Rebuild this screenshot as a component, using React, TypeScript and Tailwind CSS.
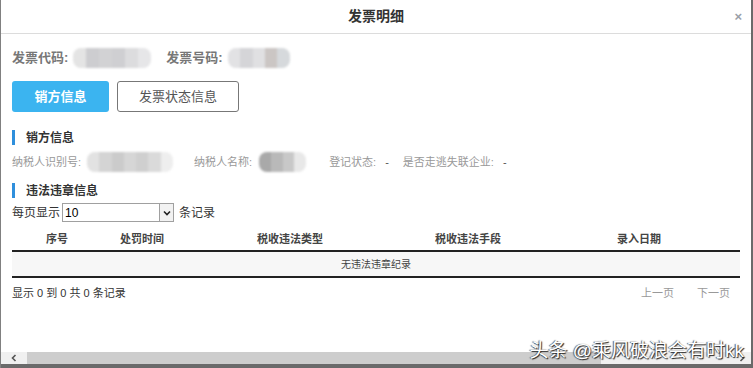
import React from "react";

const Blur: React.FC<{ w: number; shades: string[] }> = ({ w, shades }) => (
  <div className="flex h-[20px] overflow-hidden rounded-[8px] blur-[1px]" style={{ width: w }}>
    {shades.map((c, i) => (
      <div key={i} className="h-full flex-1" style={{ background: c }} />
    ))}
  </div>
);

const SectionTitle: React.FC<{ title: string }> = ({ title }) => (
  <div className="flex h-[15px] items-center">
    <div className="h-[15px] w-[3px] bg-[#2f8fdc]" />
    <span className="ml-[11px] text-[12px] font-bold text-[#333]">{title}</span>
  </div>
);

const cols = [
  { label: "序号", w: "w-[90px]" },
  { label: "处罚时间", w: "w-[80px]" },
  { label: "税收违法类型", w: "w-[216px]" },
  { label: "税收违法手段", w: "w-[140px]" },
  { label: "录入日期", w: "flex-1" },
];

export default function App() {
  return (
    <div
      className="relative flex h-[368px] w-[753px] flex-col overflow-hidden border-l border-r-2 border-l-[#808080] border-r-[#6a6a6a] bg-white text-[#333]"
      style={{ fontFamily: '"Liberation Sans", "Noto Sans CJK SC", sans-serif' }}
    >
      {/* HEADER */}
      <div className="relative flex h-[34px] shrink-0 items-center justify-center border-b border-[#dcdcdc]">
        <span className="text-[14px] font-bold text-[#333]">发票明细</span>
        <span className="absolute right-[9px] top-[7px] text-[13px] font-bold text-[#9aa0a8]">×</span>
      </div>

      {/* BODY */}
      <div className="flex flex-1 flex-col px-[11px]">
        <div className="mt-[14px] flex h-[20px] items-center text-[13px] font-bold text-[#777]">
          <span className="mr-[5px]">发票代码:</span>
          <Blur w={78} shades={["#e4e4e4", "#cdcdd0", "#d2d2d4", "#cfcfd2", "#dcdcde", "#e6e6e8"]} />
          <span className="ml-[15px] mr-[5px]">发票号码:</span>
          <Blur w={62} shades={["#e2e2e4", "#d5d5d8", "#e0e0e2", "#cbc6c4", "#d6d9dc"]} />
        </div>

        <div className="mt-[13px] flex gap-[8px]">
          <div className="flex h-[31px] w-[97px] items-center justify-center rounded-[3px] bg-[#3bb4f0] text-[13px] font-bold text-white">
            销方信息
          </div>
          <div className="flex h-[31px] w-[122px] items-center justify-center rounded-[3px] border border-[#777] text-[13px] text-[#555]">
            发票状态信息
          </div>
        </div>

        <div className="mt-[18px]">
          <SectionTitle title="销方信息" />
        </div>

        <div className="mt-[9px] flex h-[16px] items-center text-[11px] text-[#999]">
          <span className="mr-[6px]">纳税人识别号:</span>
          <Blur w={86} shades={["#e2e2e2", "#d4d4d4", "#cbcbcb", "#d6d6d6", "#cfcfcf", "#dadada", "#eeeeee"]} />
          <span className="ml-[21px] mr-[7px]">纳税人名称:</span>
          <Blur w={47} shades={["#a9a9a9", "#b9b9b9", "#c8c8c8", "#e8e8e8"]} />
          <span className="ml-[23px]">登记状态:</span>
          <span className="ml-[9px] text-[#555]">-</span>
          <span className="ml-[14px]">是否走逃失联企业:</span>
          <span className="ml-[9px] text-[#555]">-</span>
        </div>

        <div className="mt-[13px]">
          <SectionTitle title="违法违章信息" />
        </div>

        <div className="mt-[5px] flex h-[19px] items-center text-[12px] text-[#333]">
          <span>每页显示</span>
          <div className="ml-[2px] flex h-[19px] w-[112px] items-center border border-[#a0a0a0] bg-white">
            <span className="flex-1 pl-[2px] text-[12px] text-black">10</span>
            <div className="flex h-full w-[14px] items-center justify-center border-l border-[#a0a0a0] bg-[#f2f2f2]">
              <svg width="8" height="6" viewBox="0 0 8 6">
                <path d="M1 1.5 L4 4.5 L7 1.5" stroke="#222" strokeWidth="1.6" fill="none" />
              </svg>
            </div>
          </div>
          <span className="ml-[5px]">条记录</span>
        </div>

        {/* TABLE */}
        <div className="mt-[7px] flex h-[23px] items-center border-b-2 border-[#222] text-[11px] font-bold text-[#444]">
          {cols.map((c) => (
            <div key={c.label} className={`${c.w} text-center`}>
              {c.label}
            </div>
          ))}
        </div>
        <div className="flex h-[26px] items-center justify-center border-b-2 border-[#222] bg-[#f7f7f7] text-[10px] text-[#444]">
          无违法违章纪录
        </div>

        <div className="mt-[7px] flex items-center justify-between text-[11px]">
          <span className="text-[#333]">显示 0 到 0 共 0 条记录</span>
          <div className="flex gap-[23px] pr-[10px] text-[#999]">
            <span>上一页</span>
            <span>下一页</span>
          </div>
        </div>
      </div>

      {/* WATERMARK */}
      <div
        className="absolute bottom-[8px] right-[7px] text-[19px] leading-none text-white"
        style={{ textShadow: "1px 1px 1px #222, -1px 0 1px #555" }}
      >
        头条 @乘风破浪会有时kk
      </div>

      {/* HORIZONTAL SCROLLBAR */}
      <div className="flex h-[12px] shrink-0 items-center bg-[#f0f0f0]">
        <div className="flex h-full w-[26px] items-center justify-center">
          <svg width="6" height="8" viewBox="0 0 6 8">
            <path d="M4.5 1 L1.5 4 L4.5 7" stroke="#555" strokeWidth="1.6" fill="none" />
          </svg>
        </div>
        <div className="h-full w-[574px] bg-[#cdcdcd]" />
        <div className="flex-1" />
        <div className="flex h-full w-[18px] items-center justify-center">
          <svg width="6" height="8" viewBox="0 0 6 8">
            <path d="M1.5 1 L4.5 4 L1.5 7" stroke="#555" strokeWidth="1.6" fill="none" />
          </svg>
        </div>
      </div>
      <div className="h-[4px] shrink-0 bg-[#6a6a6a]" />
    </div>
  );
}
